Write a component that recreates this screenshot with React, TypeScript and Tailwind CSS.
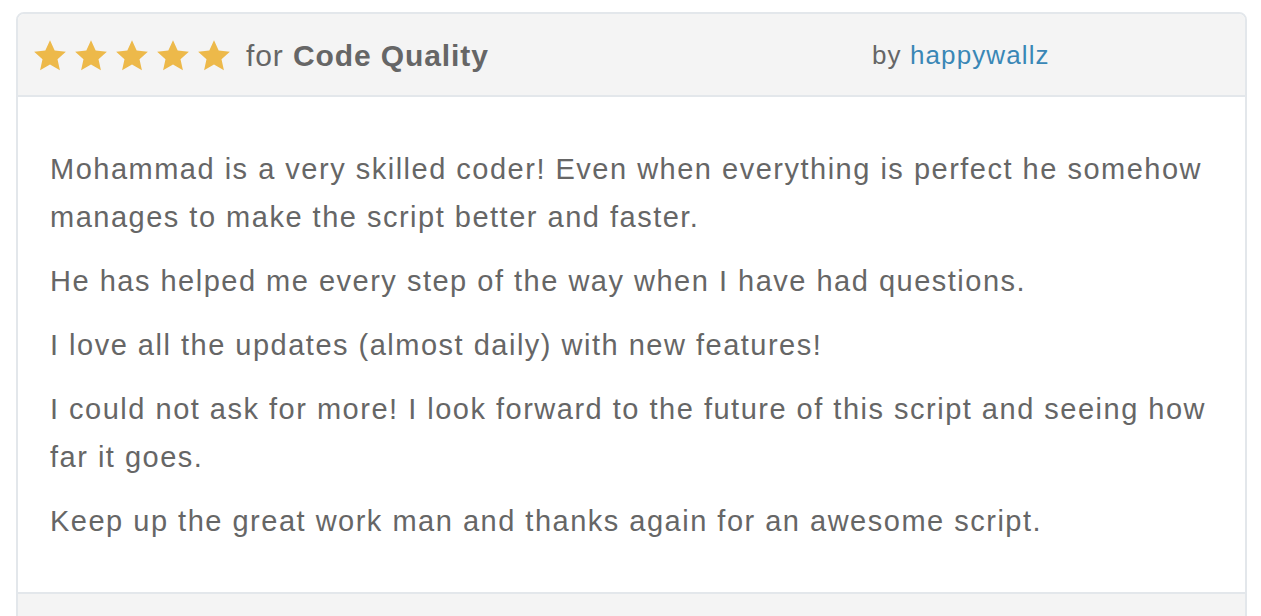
import * as React from 'react'

const paragraphs = [
  'Mohammad is a very skilled coder! Even when everything is perfect he somehow manages to make the script better and faster.',
  'He has helped me every step of the way when I have had questions.',
  'I love all the updates (almost daily) with new features!',
  'I could not ask for more! I look forward to the future of this script and seeing how far it goes.',
  'Keep up the great work man and thanks again for an awesome script.',
]

function Star() {
  return (
    <svg width="34" height="33" viewBox="0 0 24 23" className="shrink-0">
      <path
        d="M12 0.8l3.3 7.2 7.9 0.8-5.9 5.3 1.7 7.8L12 17.9l-7 4 1.7-7.8L0.8 8.8l7.9-0.8z"
        fill="#edb94a"
      />
    </svg>
  )
}

export default function App() {
  return (
    <div className="bg-white h-screen overflow-hidden pt-3 pl-4 font-['Liberation_Sans',Arial,sans-serif] text-[#666]">
      <div className="w-[1231px] border-2 border-[#e3e7eb] rounded-t-[8px] overflow-hidden">
        {/* header */}
        <div className="h-[83px] bg-[#f4f4f4] border-b-2 border-[#e3e7eb] flex items-center px-[15px] pt-[2px]">
          <div className="w-[839px] flex items-center">
            <div className="flex items-center gap-[7px]">
              <Star />
              <Star />
              <Star />
              <Star />
              <Star />
            </div>
            <span className="ml-[15px] text-[30px] tracking-[0.9px]">
              for <b className="font-bold">Code Quality</b>
            </span>
          </div>
          <span className="text-[26px] tracking-[1.1px]">
            by <a className="text-[#3a87b6]">happywallz</a>
          </span>
        </div>

        {/* body */}
        <div className="bg-white px-8 pt-[48px] pb-[47px] flex flex-col gap-4 text-[29px] tracking-[1.5px] leading-[48px]">
          {paragraphs.map((p, i) => (
            <p key={i}>{p}</p>
          ))}
        </div>

        {/* footer */}
        <div className="h-20 bg-[#f4f4f4] border-t-2 border-[#e3e7eb]" />
      </div>
    </div>
  )
}
